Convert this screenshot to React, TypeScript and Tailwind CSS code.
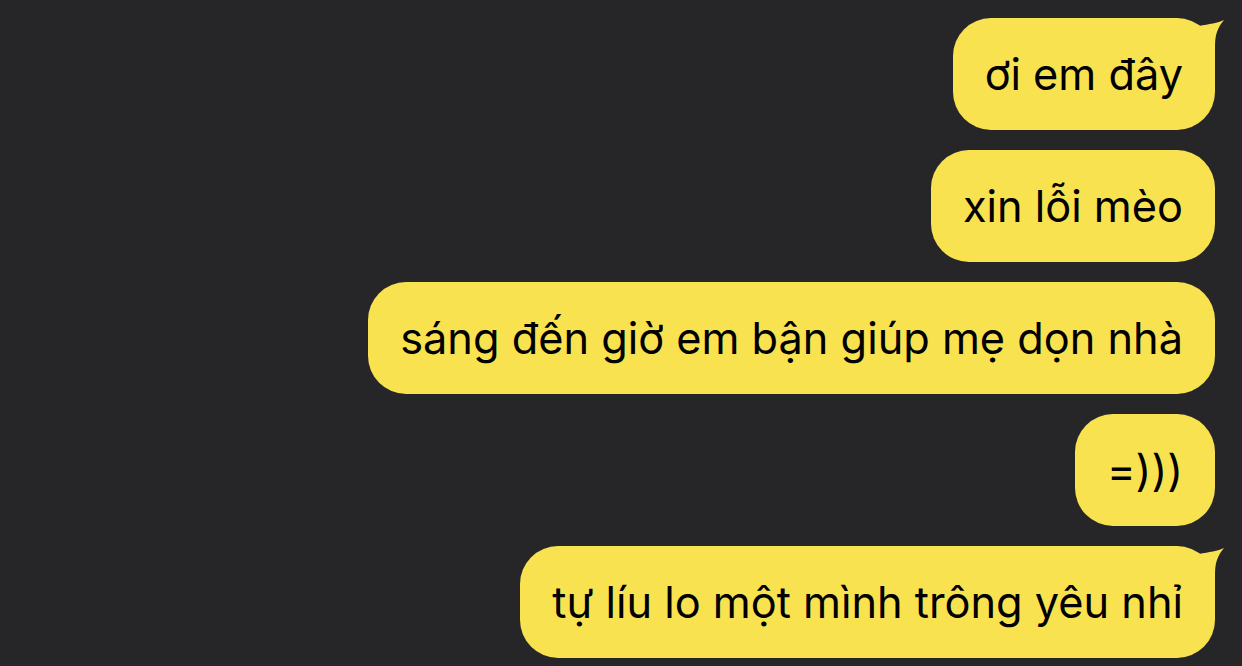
const messages = [
  { text: 'ơi em đây', tail: true },
  { text: 'xin lỗi mèo', tail: false },
  { text: 'sáng đến giờ em bận giúp mẹ dọn nhà', tail: false },
  { text: '=)))', tail: false },
  { text: 'tự líu lo một mình trông yêu nhỉ', tail: true },
];

function Tail() {
  // đuôi bong bóng nhô lên ở góc trên bên phải
  return (
    <svg
      className="absolute right-[-10px] top-0"
      width="50"
      height="44"
      viewBox="0 0 50 44"
    >
      <path
        d="M18 12 L24 8 C34 6 43 5 49 2 C43 9 40 16 40 28 V40 H18 Z"
        fill="#f9e250"
      />
    </svg>
  );
}

function Bubble({ text, tail }: { text: string; tail: boolean }) {
  return (
    <div className="relative flex h-[112px] items-center rounded-[38px] bg-[#f9e250] px-8 text-[43.3px] text-black">
      {tail && <Tail />}
      <span className="relative">{text}</span>
    </div>
  );
}

export default function App() {
  return (
    <div
      className="flex h-[666px] w-[1242px] flex-col items-end gap-5 overflow-hidden bg-[#262628] pr-[27px] pt-[18px]"
      style={{ fontFamily: 'Inter, "Noto Sans", sans-serif' }}
    >
      {messages.map((m, i) => (
        <Bubble key={i} text={m.text} tail={m.tail} />
      ))}
    </div>
  );
}
